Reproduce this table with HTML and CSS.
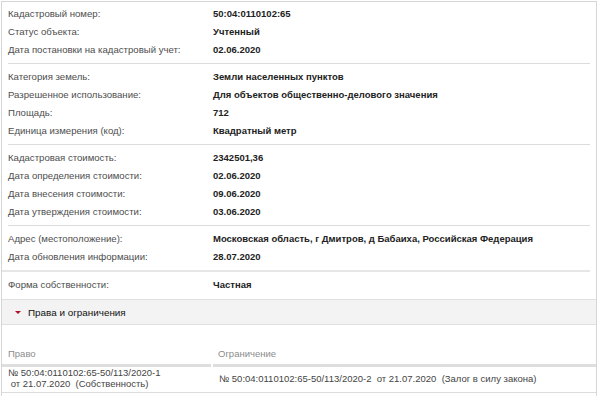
FILE: index.html
```html
<!DOCTYPE html>
<html lang="ru">
<head>
<meta charset="utf-8">
<title>Объект</title>
<link rel="stylesheet" href="styles.css">
</head>
<body>
<div class="panel">
  <div class="group first">
    <div class="row"><span class="label">Кадастровый номер:</span><span class="value">50:04:0110102:65</span></div>
    <div class="row"><span class="label">Статус объекта:</span><span class="value">Учтенный</span></div>
    <div class="row"><span class="label">Дата постановки на кадастровый учет:</span><span class="value">02.06.2020</span></div>
  </div>
  <div class="group">
    <div class="row"><span class="label">Категория земель:</span><span class="value">Земли населенных пунктов</span></div>
    <div class="row"><span class="label">Разрешенное использование:</span><span class="value">Для объектов общественно-делового значения</span></div>
    <div class="row"><span class="label">Площадь:</span><span class="value">712</span></div>
    <div class="row"><span class="label">Единица измерения (код):</span><span class="value">Квадратный метр</span></div>
  </div>
  <div class="group">
    <div class="row"><span class="label">Кадастровая стоимость:</span><span class="value">2342501,36</span></div>
    <div class="row"><span class="label">Дата определения стоимости:</span><span class="value">02.06.2020</span></div>
    <div class="row"><span class="label">Дата внесения стоимости:</span><span class="value">09.06.2020</span></div>
    <div class="row"><span class="label">Дата утверждения стоимости:</span><span class="value">03.06.2020</span></div>
  </div>
  <div class="group wide">
    <div class="row"><span class="label">Адрес (местоположение):</span><span class="value">Московская область, г Дмитров, д Бабаиха, Российская Федерация</span></div>
    <div class="row"><span class="label">Дата обновления информации:</span><span class="value">28.07.2020</span></div>
  </div>
  <div class="group last">
    <div class="row"><span class="label">Форма собственности:</span><span class="value">Частная</span></div>
  </div>
  <div class="section-head"><span class="caret"></span><span class="section-title">Права и ограничения</span></div>
  <div class="rights">
    <div class="rights-head">
      <div class="col col1">Право</div>
      <div class="col col2">Ограничение</div>
    </div>
    <div class="rights-row">
      <div class="col col1">№ 50:04:0110102:65-50/113/2020-1<br>&nbsp;от 21.07.2020 &nbsp;(Собственность)</div>
      <div class="col col2">№ 50:04:0110102:65-50/113/2020-2 &nbsp;от 21.07.2020 &nbsp;(Залог в силу закона)</div>
    </div>
  </div>
</div>
</body>
</html>
```
FILE: styles.css
```css
html, body {
  margin: 0;
  padding: 0;
  background: #ffffff;
}
body {
  font-family: "Liberation Sans", Arial, sans-serif;
  font-size: 9.5px;
  color: #4a4a4a;
}
.panel {
  margin: 1px 3px 0 1px;
  border: 1px solid #d6d6d6;
  border-bottom: none;
  height: 400px;
}
.group {
  margin: 0 6px 0 6px;
  padding: 4px 0;
  border-bottom: 1px solid #dcdcdc;
}
.group.first {
  padding-top: 3px;
}
.group.wide {
  margin-left: 0;
  padding-left: 6px;
  border-bottom: 2px solid #e6e6e6;
}
.group.last {
  border-bottom: none;
  padding-bottom: 5px;
}
.row {
  display: flex;
  height: 18px;
  line-height: 18px;
  white-space: nowrap;
}
.label {
  width: 205px;
  flex: none;
  font-size: 9.6px;
  color: #4d4d4d;
}
.value {
  font-weight: bold;
  color: #222222;
}
.section-head {
  display: flex;
  align-items: center;
  height: 24px;
  background: #f3f3f3;
  border-top: 1px solid #e0e0e0;
  border-bottom: 1px solid #e0e0e0;
  padding-left: 13px;
}
.caret {
  width: 0;
  height: 0;
  border-left: 3px solid transparent;
  border-right: 3px solid transparent;
  border-top: 3px solid #b0102a;
  margin-right: 7px;
}
.section-title {
  font-size: 9.9px;
  color: #111111;
}
.rights-head {
  display: flex;
  gap: 2px;
}
.rights-head .col {
  padding: 23px 0 4px;
  line-height: 12px;
  color: #8c8c8c;
  border-bottom: 3px solid #dedede;
}
.col1 {
  width: 203px;
  flex: none;
  padding-left: 6px !important;
  box-sizing: content-box;
}
.rights-head .col2 {
  flex: 1;
  padding-left: 5px;
}
.rights-row {
  display: flex;
  align-items: center;
  gap: 2px;
  padding-bottom: 3px;
  border-bottom: 1px solid #dcdcdc;
  line-height: 11px;
  color: #444444;
  white-space: nowrap;
}
.rights-row .col2 {
  flex: 1;
  padding-left: 6px;
}
```
